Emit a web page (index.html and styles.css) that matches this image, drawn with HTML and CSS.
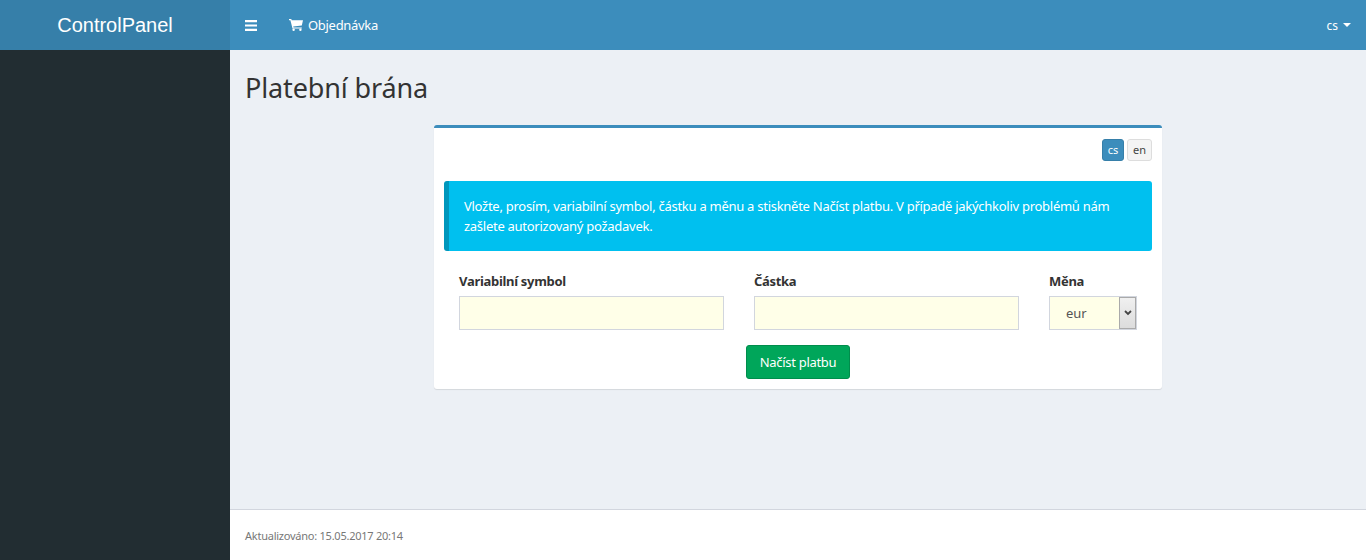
FILE: index.html
```html
<!DOCTYPE html>
<html lang="cs">
<head>
<meta charset="utf-8">
<title>Platební brána</title>
<link rel="stylesheet" href="styles.css">
</head>
<body>
<header class="topbar">
  <a class="logo">ControlPanel</a>
  <nav class="nav">
    <svg class="burger" viewBox="0 0 12 11" width="12" height="11"><path d="M0 0h12v2.2H0zM0 4.4h12v2.2H0zM0 8.8h12V11H0z" fill="#fff"/></svg>
    <a class="nav-link">
      <svg class="cart" viewBox="0 0 14 12" width="14" height="12"><path d="M0 0h2.3l.4 1.3H14l-1.2 5.2-8.6.9.3 1h8.3v1.2H3.5L1.4 1.2H0z" fill="#fff"/><circle cx="4.6" cy="10.8" r="1.2" fill="#fff"/><circle cx="11.4" cy="10.8" r="1.2" fill="#fff"/></svg>
      <span>Objednávka</span>
    </a>
    <a class="lang-menu">cs<i class="caret"></i></a>
  </nav>
</header>
<div class="layout">
  <aside class="sidebar"></aside>
  <div class="content-wrap">
    <main class="content">
      <h1 class="title">Platební brána</h1>
      <section class="card">
        <div class="langs">
          <a class="lang lang-active">cs</a>
          <a class="lang">en</a>
        </div>
        <div class="alert">Vložte, prosím, variabilní symbol, částku a měnu a stiskněte Načíst platbu. V případě jakýchkoliv problémů nám zašlete autorizovaný požadavek.</div>
        <form class="form">
          <div class="fields">
            <div class="field field-wide">
              <label class="label">Variabilní symbol</label>
              <input class="input" type="text">
            </div>
            <div class="field field-wide">
              <label class="label">Částka</label>
              <input class="input" type="text">
            </div>
            <div class="field field-narrow">
              <label class="label">Měna</label>
              <div class="select">
                <span class="select-value">eur</span>
                <span class="select-arrow"><svg viewBox="0 0 8 6" width="8" height="6"><path d="M1 1l3 3 3-3" fill="none" stroke="#444" stroke-width="1.8"/></svg></span>
              </div>
            </div>
          </div>
          <div class="actions"><button class="submit" type="button">Načíst platbu</button></div>
        </form>
      </section>
    </main>
    <footer class="footer">Aktualizováno: 15.05.2017 20:14</footer>
  </div>
</div>
</body>
</html>
```
FILE: styles.css
```css
* { box-sizing: border-box; }
html, body { margin: 0; height: 100%; }
body {
  height: 560px;
  overflow: hidden;
  display: flex;
  flex-direction: column;
  font-family: "Noto Sans", "Open Sans", sans-serif;
  font-size: 13px;
  color: #333;
  background: #ecf0f5;
}
.topbar { display: flex; height: 50px; background: #3c8dbc; color: #fff; flex: none; }
.logo {
  width: 230px;
  background: #367fa9;
  font-family: "Liberation Sans", Arial, sans-serif;
  font-size: 20px;
  line-height: 50px;
  text-align: center;
}
.nav { flex: 1; display: flex; align-items: center; padding: 0 15px; }
.burger { flex: none; }
.nav-link { display: flex; align-items: center; gap: 5px; margin-left: 32px; font-size: 13px; letter-spacing: -0.3px; }
.lang-menu { margin-left: auto; display: flex; align-items: center; font-size: 12px; }
.caret {
  width: 0; height: 0; margin-left: 5px;
  border-left: 4px solid transparent;
  border-right: 4px solid transparent;
  border-top: 4px solid #fff;
}
.layout { flex: 1; display: flex; min-height: 0; }
.sidebar { width: 230px; background: #222d32; flex: none; }
.content-wrap { flex: 1; display: flex; flex-direction: column; }
.content { flex: 1; padding: 15px 15px 0; }
.title { margin: 5px 0 0; font-size: 27px; font-weight: 400; line-height: 36px; color: #333; letter-spacing: -0.13px; }
.card {
  width: 728px;
  height: 264px;
  margin: 19px auto 0;
  padding: 11px 10px 0;
  background: #fff;
  border-top: 3px solid #3c8dbc;
  border-radius: 3px;
  box-shadow: 0 1px 1px rgba(0,0,0,.1);
}
.langs { display: flex; justify-content: flex-end; gap: 3px; }
.lang {
  height: 22px; padding: 0 5px;
  font-size: 11px; line-height: 20px;
  border: 1px solid #ddd; border-radius: 3px;
  background: #f4f4f4; color: #444;
}
.lang-active { width: 22px; padding: 0; text-align: center; background: #3c8dbc; border-color: #367fa9; color: #fff; }
.alert {
  margin-top: 20px;
  height: 70px;
  padding: 15px 15px 0 15px;
  background: #00c0ef;
  border-left: 5px solid #0097bc;
  border-radius: 3px;
  color: #fff;
  font-size: 13px;
  line-height: 20px;
  letter-spacing: -0.27px;
}
.form { padding: 0 15px; }
.fields { display: flex; gap: 30px; margin-top: 20px; }
.field { display: flex; flex-direction: column; }
.field-wide { width: 265px; }
.field-narrow { width: 88px; }
.label { font-weight: 700; font-size: 13px; line-height: 20px; letter-spacing: -0.3px; margin-bottom: 5px; color: #333; }
.input {
  height: 34px; width: 100%;
  border: 1px solid #d2d6de;
  background: #ffffe8;
  outline: none;
}
.select {
  display: flex; height: 34px;
  border: 1px solid #d2d6de;
  background: #ffffe8;
}
.select-value { flex: 1; padding-left: 16px; line-height: 32px; font-size: 13px; color: #555; }
.select-arrow {
  width: 17px;
  display: flex; align-items: center; justify-content: center;
  background: linear-gradient(#f0f0f0, #dcdcdc);
  border: 1px solid #aaa;
}
.actions { display: flex; justify-content: center; margin-top: 15px; }
.submit {
  width: 104px; height: 34px; padding: 0;
  font: inherit; font-size: 13px; letter-spacing: -0.3px;
  color: #fff;
  background: #00a65a;
  border: 1px solid #008d4c;
  border-radius: 3px;
}
.footer {
  height: 51px;
  padding: 0 15px;
  background: #fff;
  border-top: 1px solid #d2d6de;
  font-size: 11px;
  line-height: 51px;
  letter-spacing: -0.24px;
  color: #777;
}
```
